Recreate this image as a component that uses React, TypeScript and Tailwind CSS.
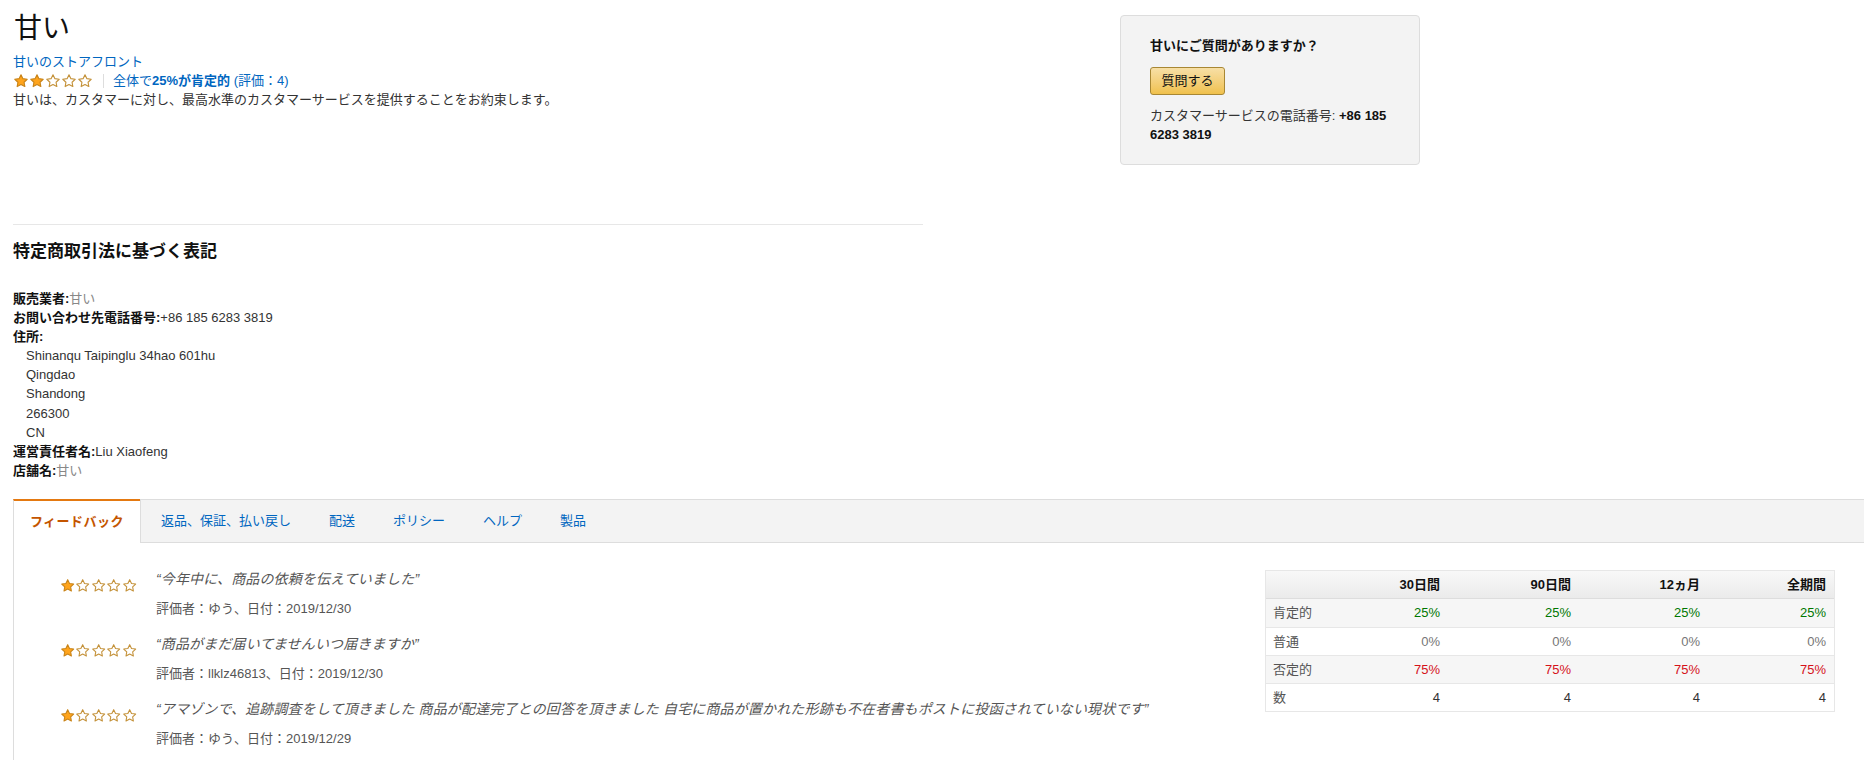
import React from 'react';

const STAR = 'M12 2.6l2.85 5.9 6.45.9-4.7 4.5 1.15 6.4L12 17.3l-5.75 3 1.15-6.4-4.7-4.5 6.45-.9z';

function Stars({ count, size }: { count: number; size: number }) {
  return (
    <div className="flex items-center">
      {[0, 1, 2, 3, 4].map(i => (
        <svg key={i} width={size} height={size} viewBox="0 0 24 24" className="shrink-0">
          <path
            d={STAR}
            fill={i < count ? '#ffa41c' : '#ffffff'}
            stroke={i < count ? '#c98419' : '#c4923a'}
            strokeWidth="1.7"
            strokeLinejoin="round"
          />
        </svg>
      ))}
    </div>
  );
}

const tabs = ['返品、保証、払い戻し', '配送', 'ポリシー', 'ヘルプ', '製品'];

const reviews = [
  { text: '今年中に、商品の依頼を伝えていました', who: 'ゆう', date: '2019/12/30' },
  { text: '商品がまだ届いてませんいつ届きますか', who: 'llklz46813', date: '2019/12/30' },
  {
    text: 'アマゾンで、追跡調査をして頂きました 商品が配達完了との回答を頂きました 自宅に商品が置かれた形跡も不在者書もポストに投函されていない現状です',
    who: 'ゆう',
    date: '2019/12/29',
  },
];

const periods = ['30日間', '90日間', '12ヵ月', '全期間'];

const rows = [
  { label: '肯定的', value: '25%', color: 'text-[#007600]', bg: 'bg-[#f6f6f6]' },
  { label: '普通', value: '0%', color: 'text-[#767676]', bg: 'bg-white' },
  { label: '否定的', value: '75%', color: 'text-[#d5121a]', bg: 'bg-[#f6f6f6]' },
  { label: '数', value: '4', color: 'text-[#333]', bg: 'bg-white' },
];

export default function App() {
  return (
    <div className="min-h-screen bg-white text-[13px] text-[#111] font-['Liberation_Sans','Noto_Sans_CJK_JP',sans-serif]">
      {/* top: seller summary + question box */}
      <div className="flex">
        <div className="ml-[13px] w-[910px] shrink-0">
          <h1 className="pt-[12px] pl-[1px] text-[28px] leading-[34px] font-normal text-[#111]">甘い</h1>
          <div className="mt-[6px] leading-[19px] text-[#0066c0]">甘いのストアフロント</div>
          <div className="flex items-center h-[19px] leading-[19px]">
            <Stars count={2} size={16} />
            <span className="ml-[10px] h-[14px] w-px bg-[#ddd]" />
            <span className="ml-[9px] text-[#0066c0]">
              全体で<span className="font-bold">25%が肯定的</span> (評価：4)
            </span>
          </div>
          <p className="leading-[19px] text-[#333]">甘いは、カスタマーに対し、最高水準のカスタマーサービスを提供することをお約束します。</p>
          <div className="mt-[115px] h-px bg-[#e7e7e7]" />

          <h2 className="mt-[15px] text-[17px] leading-[24px] font-bold text-[#111]">特定商取引法に基づく表記</h2>
          <div className="mt-[25px] leading-[19.1px] text-[#333]">
            <div><span className="font-bold text-[#111]">販売業者:</span><span className="text-[#888]">甘い</span></div>
            <div><span className="font-bold text-[#111]">お問い合わせ先電話番号:</span>+86 185 6283 3819</div>
            <div><span className="font-bold text-[#111]">住所:</span></div>
            <div className="pl-[13px]">
              <div>Shinanqu Taipinglu 34hao 601hu</div>
              <div>Qingdao</div>
              <div>Shandong</div>
              <div>266300</div>
              <div>CN</div>
            </div>
            <div><span className="font-bold text-[#111]">運営責任者名:</span>Liu Xiaofeng</div>
            <div><span className="font-bold text-[#111]">店舗名:</span><span className="text-[#888]">甘い</span></div>
          </div>
        </div>

        <div className="ml-[197px] mt-[15px] h-[150px] w-[300px] shrink-0 rounded-[4px] border border-[#ddd] bg-[#f3f3f3] pl-[29px] pt-[20px]">
          <div className="font-bold leading-[19px] text-[#111]">甘いにご質問がありますか？</div>
          <button className="mt-[12px] h-[28px] w-[75px] rounded-[3px] border border-[#a88734] bg-gradient-to-b from-[#f7dfa5] to-[#f0c14b] text-[13px] text-[#111]">
            質問する
          </button>
          <p className="mt-[11px] w-[262px] leading-[19px] text-[#333]">
            カスタマーサービスの電話番号: <span className="font-bold text-[#111]">+86 185 6283 3819</span>
          </p>
        </div>
      </div>

      {/* tabs */}
      <div className="mt-[19px] ml-[13px] flex h-[44px]">
        <div className="flex w-[127px] shrink-0 items-center justify-center border-l border-t-2 border-l-[#ddd] border-t-[#e47911] bg-white font-bold tracking-[0.5px] text-[#c45500]">
          フィードバック
        </div>
        <div className="flex flex-1 items-center border border-r-0 border-[#ddd] bg-[#f3f3f3] pl-[1px]">
          {tabs.map(t => (
            <span key={t} className="px-[19px] text-[#0066c0]">{t}</span>
          ))}
        </div>
      </div>

      {/* feedback panel */}
      <div className="ml-[13px] flex border-l border-[#ddd] pt-[27px] pb-[20px]">
        <div className="w-[1251px] shrink-0 pl-[46px]">
          {reviews.map((r, i) => (
            <div key={i} className="mb-[17px] flex">
              <div className="mt-[8px] w-[96px] shrink-0">
                <Stars count={1} size={15.4} />
              </div>
              <div>
                <div className="text-[14px] italic leading-[18px] tracking-[0.15px] text-[#555]">“{r.text}”</div>
                <div className="mt-[12px] leading-[18px] text-[#555]">評価者：{r.who}、日付：{r.date}</div>
              </div>
            </div>
          ))}
        </div>

        {/* summary table */}
        <div className="h-fit w-[570px] shrink-0 border border-[#e7e7e7]">
          <div className="grid h-[28px] grid-cols-[52px_130px_131px_129px_126px] items-center border-b border-[#ddd] bg-gradient-to-b from-[#f8f8f8] to-[#ebebeb]">
            <div />
            {periods.map(p => (
              <div key={p} className="pr-[8px] text-right font-bold text-[#111]">{p}</div>
            ))}
          </div>
          {rows.map((r, i) => (
            <div
              key={r.label}
              className={`grid h-[28px] grid-cols-[52px_130px_131px_129px_126px] items-center ${i > 0 ? 'border-t border-[#e7e7e7]' : ''} ${r.bg}`}
            >
              <div className="pl-[7px] text-[#555]">{r.label}</div>
              {periods.map(p => (
                <div key={p} className={`pr-[8px] text-right ${r.color}`}>{r.value}</div>
              ))}
            </div>
          ))}
        </div>
      </div>
    </div>
  );
}
